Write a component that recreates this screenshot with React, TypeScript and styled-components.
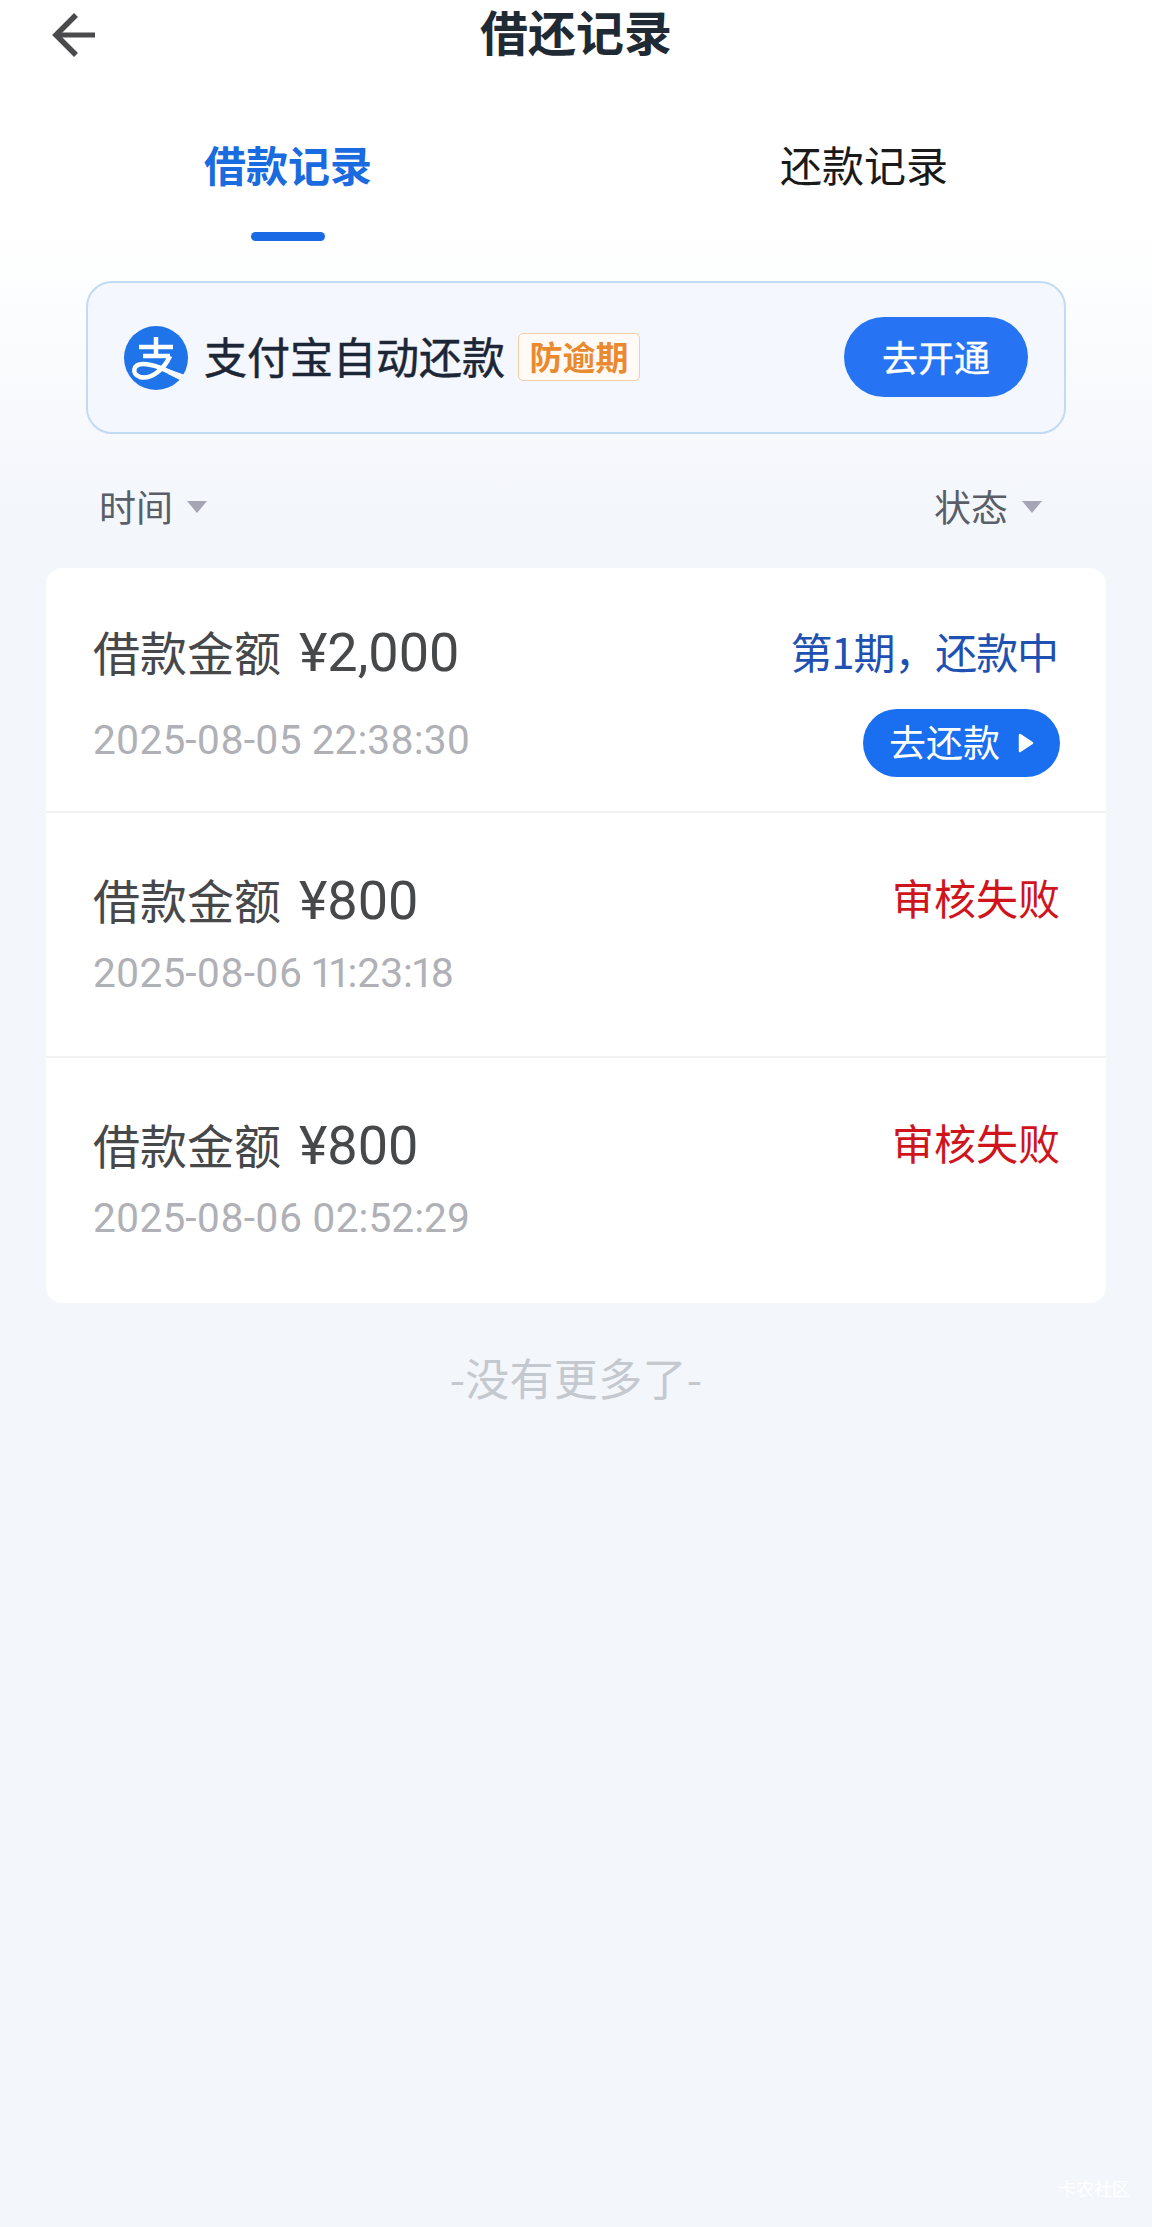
import React from 'react'
import styled, { createGlobalStyle } from 'styled-components'

type LoanRecord = {
  amount: string
  time: string
  status: string
  repaying?: boolean
}

const records: LoanRecord[] = [
  { amount: '¥2,000', time: '2025-08-05 22:38:30', status: '第1期，还款中', repaying: true },
  { amount: '¥800', time: '2025-08-06 11:23:18', status: '审核失败' },
  { amount: '¥800', time: '2025-08-06 02:52:29', status: '审核失败' },
]

const App: React.FC = () => {
  return (
    <Page>
      <GlobalStyle />
      <Header>
        <BackIcon viewBox='0 0 46 46'>
          <path d='M24 3 L4 23 L24 43' fill='none' stroke='#4a4a4c' strokeWidth='5.5' />
          <path d='M6 23 H43' fill='none' stroke='#4a4a4c' strokeWidth='5' />
        </BackIcon>
        <Title>借还记录</Title>
      </Header>
      <Tabs>
        <Tab $active>
          借款记录
          <TabBar />
        </Tab>
        <Tab>还款记录</Tab>
      </Tabs>
      <Banner>
        <AlipayLogo viewBox='0 0 64 64'>
          <circle cx='32' cy='32' r='32' fill='#1e74e8' />
          <path d='M15 21 H49 M32 11 V30 M19 30 H46' fill='none' stroke='#fff' strokeWidth='4.5' />
          <path
            d='M46 30 C40 44 26 54 16 51 C7 48 9 38 19 38 C30 38 42 44 56 51'
            fill='none'
            stroke='#fff'
            strokeWidth='4.5'
          />
          <path d='M44 43 L64 50 L60 56 L44 48 Z' fill='#f4f8fe' />
        </AlipayLogo>
        <BannerText>支付宝自动还款</BannerText>
        <Tag>防逾期</Tag>
        <OpenButton>去开通</OpenButton>
      </Banner>
      <Filters>
        <Filter>
          时间
          <Caret />
        </Filter>
        <Filter>
          状态
          <Caret />
        </Filter>
      </Filters>
      <List>
        {records.map((r) => (
          <Row key={r.time} $repaying={r.repaying}>
            <RowLeft>
              <Amount>
                借款金额
                <AmountValue>{r.amount}</AmountValue>
              </Amount>
              <Time $repaying={r.repaying}>{r.time}</Time>
            </RowLeft>
            <RowRight>
              <Status $repaying={r.repaying}>{r.status}</Status>
              {r.repaying && (
                <RepayButton>
                  去还款
                  <PlayIcon viewBox='0 0 16 20'>
                    <path d='M2 2 L14 10 L2 18 Z' fill='#fff' stroke='#fff' strokeWidth='2.5' strokeLinejoin='round' />
                  </PlayIcon>
                </RepayButton>
              )}
            </RowRight>
          </Row>
        ))}
      </List>
      <NoMore>-没有更多了-</NoMore>
      <Watermark>卡农社区</Watermark>
    </Page>
  )
}

export default App

const GlobalStyle = createGlobalStyle`
  html, body {
    margin: 0;
    padding: 0;
  }
  body {
    font-family: "Noto Sans CJK SC", "Noto Sans", sans-serif;
  }
`
const Page = styled.div`
  position: relative;
  width: 1152px;
  height: 2227px;
  overflow: hidden;
  background: linear-gradient(#ffffff 0, #ffffff 230px, #f3f6fb 520px);
`
const Header = styled.div`
  position: relative;
  height: 69px;
  display: flex;
  align-items: center;
  justify-content: center;
`
const BackIcon = styled.svg`
  position: absolute;
  left: 52px;
  top: 12px;
  width: 46px;
  height: 46px;
`
const Title = styled.div`
  font-family: "Liberation Sans", "Noto Sans CJK SC", sans-serif;
  font-size: 48px;
  line-height: 69px;
  font-weight: 700;
  color: #1f2a35;
`
const Tabs = styled.div`
  display: grid;
  grid-template-columns: 1fr 1fr;
  height: 172px;
`
const Tab = styled.div<{ $active?: boolean }>`
  display: flex;
  flex-direction: column;
  align-items: center;
  padding-top: 66px;
  font-size: 42px;
  line-height: 58px;
  font-weight: ${(p) => (p.$active ? 700 : 400)};
  color: ${(p) => (p.$active ? '#1a6ae0' : '#1a1a1a')};
`
const TabBar = styled.div`
  width: 74px;
  height: 9px;
  margin-top: 39px;
  border-radius: 5px;
  background: #1a6ae6;
`
const Banner = styled.div`
  display: flex;
  align-items: center;
  box-sizing: border-box;
  width: 980px;
  height: 153px;
  margin: 40px 0 0 86px;
  padding: 0 36px;
  border: 2px solid #c0dbf3;
  border-radius: 26px;
  background: #f4f8fe;
`
const AlipayLogo = styled.svg`
  width: 64px;
  height: 64px;
  flex-shrink: 0;
`
const BannerText = styled.div`
  margin: -5px 0 0 16px;
  font-size: 43px;
  line-height: 60px;
  color: #1c2636;
  -webkit-text-stroke: 0.5px #1c2636;
`
const Tag = styled.div`
  box-sizing: border-box;
  width: 122px;
  height: 48px;
  margin: -1px 0 0 13px;
  border: 1.5px solid #f3cfa8;
  border-radius: 5px;
  background: #fffaf5;
  color: #ea8a30;
  font-size: 33px;
  line-height: 45px;
  font-weight: 700;
  text-align: center;
`
const OpenButton = styled.div`
  width: 184px;
  height: 80px;
  margin: -1px 0 0 auto;
  border-radius: 40px;
  background: #2673f3;
  color: #fff;
  font-size: 36px;
  line-height: 78px;
  text-align: center;
  -webkit-text-stroke: 0.4px #fff;
`
const Filters = styled.div`
  display: flex;
  justify-content: space-between;
  height: 134px;
  padding: 46px 110px 0 99px;
  box-sizing: border-box;
`
const Filter = styled.div`
  display: flex;
  align-items: center;
  height: 52px;
  font-size: 37px;
  line-height: 52px;
  color: #595e68;
`
const Caret = styled.span`
  width: 0;
  height: 0;
  margin: 2px 0 0 14px;
  border-left: 10px solid transparent;
  border-right: 10px solid transparent;
  border-top: 12px solid #a5a5b5;
`
const List = styled.div`
  margin: 0 46px;
  border-radius: 16px;
  overflow: hidden;
  background: #fff;
`
const Row = styled.div<{ $repaying?: boolean }>`
  display: flex;
  justify-content: space-between;
  box-sizing: border-box;
  height: 245px;
  padding: ${(p) => (p.$repaying ? 50 : 53)}px 46px 0 47px;
  border-bottom: 2px solid #f1f2f4;

  &:last-child {
    border-bottom: 0;
  }
`
const RowLeft = styled.div`
  display: flex;
  flex-direction: column;
`
const Amount = styled.div`
  height: 66px;
  font-size: 47px;
  line-height: 66px;
  color: #47484a;
`
const AmountValue = styled.span`
  margin-left: 18px;
  font-family: "Roboto", "Noto Sans CJK SC", sans-serif;
  font-size: 54px;
  font-weight: 400;
`
const Time = styled.div<{ $repaying?: boolean }>`
  margin-top: ${(p) => (p.$repaying ? 31 : 16)}px;
  font-family: "Roboto", sans-serif;
  font-size: 40.7px;
  line-height: 50px;
  font-variant-numeric: proportional-nums;
  color: #afb1b6;
`
const RowRight = styled.div`
  display: flex;
  flex-direction: column;
  align-items: flex-end;
`
const Status = styled.div<{ $repaying?: boolean }>`
  margin: ${(p) => (p.$repaying ? '0 2px 0 0' : '-2px 0 0')};
  font-size: 42px;
  line-height: 66px;
  letter-spacing: ${(p) => (p.$repaying ? -1.1 : 0)}px;
  color: ${(p) => (p.$repaying ? '#1f51b3' : '#d0141c')};
`
const RepayButton = styled.div`
  display: flex;
  align-items: center;
  justify-content: center;
  box-sizing: border-box;
  width: 197px;
  height: 68px;
  margin-top: 25px;
  padding-bottom: 5px;
  border-radius: 34px;
  background: #1a6ef0;
  color: #fff;
  font-size: 37px;
`
const PlayIcon = styled.svg`
  width: 16px;
  height: 20px;
  margin: 5px 0 0 18px;
`
const NoMore = styled.div`
  margin-top: 45px;
  font-size: 44px;
  line-height: 58px;
  letter-spacing: 0.3px;
  text-align: center;
  color: #c4c8cf;
`
const Watermark = styled.div`
  position: absolute;
  right: 22px;
  bottom: 26px;
  font-size: 18px;
  color: #ffffff;
`
